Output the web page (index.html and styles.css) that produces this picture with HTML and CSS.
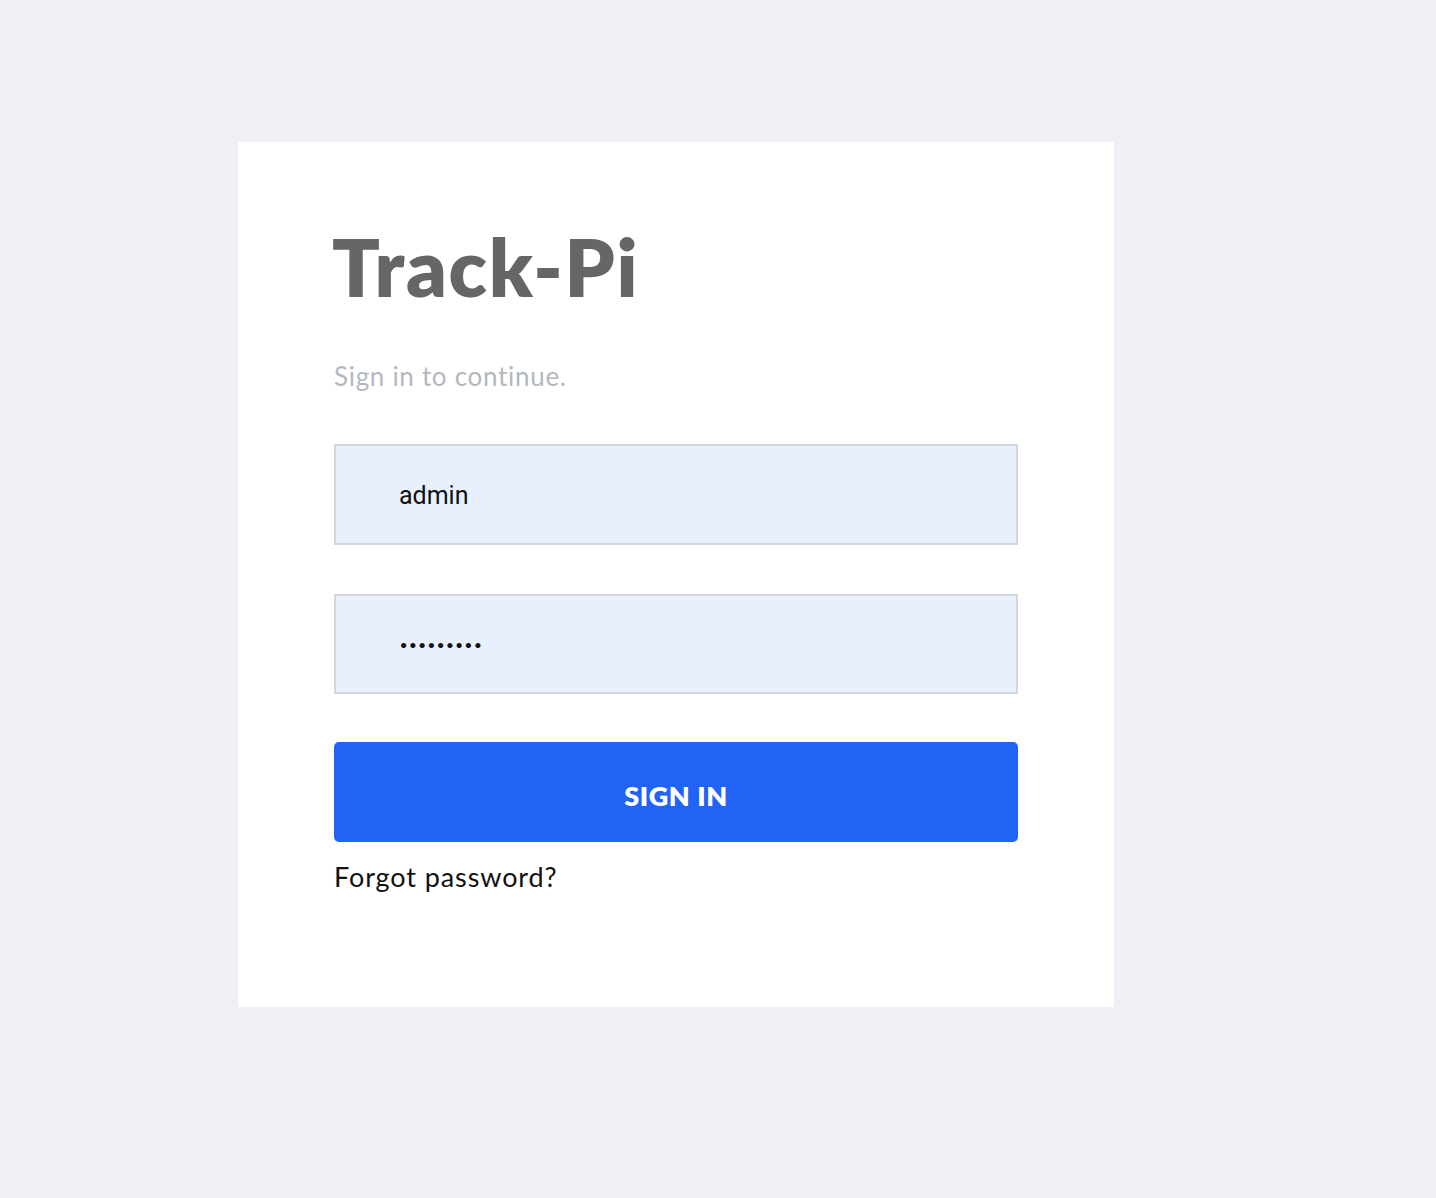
FILE: index.html
```html
<!DOCTYPE html>
<html>
<head>
<meta charset="utf-8">
<title>Track-Pi</title>
<link rel="stylesheet" href="styles.css">
</head>
<body>
<div class="page">
  <div class="card">
    <h1 class="brand">Track-Pi</h1>
    <p class="subtitle">Sign in to continue.</p>
    <form class="form">
      <div class="field"><span class="value">admin</span></div>
      <div class="field"><span class="value dots">•••••••••</span></div>
      <button type="button" class="btn">SIGN IN</button>
      <a class="forgot" href="#">Forgot password?</a>
    </form>
  </div>
</div>
</body>
</html>
```
FILE: styles.css
```css
html, body {
  margin: 0;
  padding: 0;
  background: #eff0f5;
  height: 100%;
}
.page {
  padding: 142px 0 0 238px;
}
.card {
  width: 876px;
  height: 865px;
  background: #ffffff;
  box-sizing: border-box;
  padding: 226px 96px 0 96px;
  position: relative;
}
.brand {
  position: absolute;
  left: 94px;
  top: 75px;
  margin: 0;
  font-family: "Lato", sans-serif;
  font-weight: 800;
  font-size: 79px;
  line-height: 100px;
  color: #666666;
  letter-spacing: 1.7px;
}
.subtitle {
  position: absolute;
  left: 96px;
  top: 214px;
  margin: 0;
  font-family: "Lato", sans-serif;
  font-size: 26px;
  line-height: 40px;
  color: #b3b8c0;
  letter-spacing: 0.7px;
}
.form {
  display: flex;
  flex-direction: column;
  padding-top: 76px;
  width: 684px;
}
.field {
  height: 101px;
  box-sizing: border-box;
  background: #e8f0fe;
  border: 2px solid #d3d8e0;
  display: flex;
  align-items: center;
  padding-left: 63px;
  margin-bottom: 49px;
}
.field + .field {
  height: 100px;
  margin-bottom: 48px;
}
.value {
  font-family: "Roboto", sans-serif;
  font-size: 25px;
  color: #111111;
  padding-top: 2px;
}
.dots {
  font-size: 14.5px;
  letter-spacing: 0px;
  font-family: "DejaVu Sans", sans-serif;
  font-weight: bold;
  padding-top: 4px;
}
.btn {
  height: 100px;
  border: none;
  border-radius: 5px;
  background: #2163f5;
  color: #ffffff;
  font-family: "Lato", sans-serif;
  font-weight: 800;
  font-size: 27px;
  letter-spacing: 0.6px;
  cursor: pointer;
  padding: 6px 0 0 0;
}
.forgot {
  margin-top: 18px;
  font-family: "Lato", sans-serif;
  font-size: 27px;
  color: #111111;
  text-decoration: none;
  letter-spacing: 0.9px;
}
```
